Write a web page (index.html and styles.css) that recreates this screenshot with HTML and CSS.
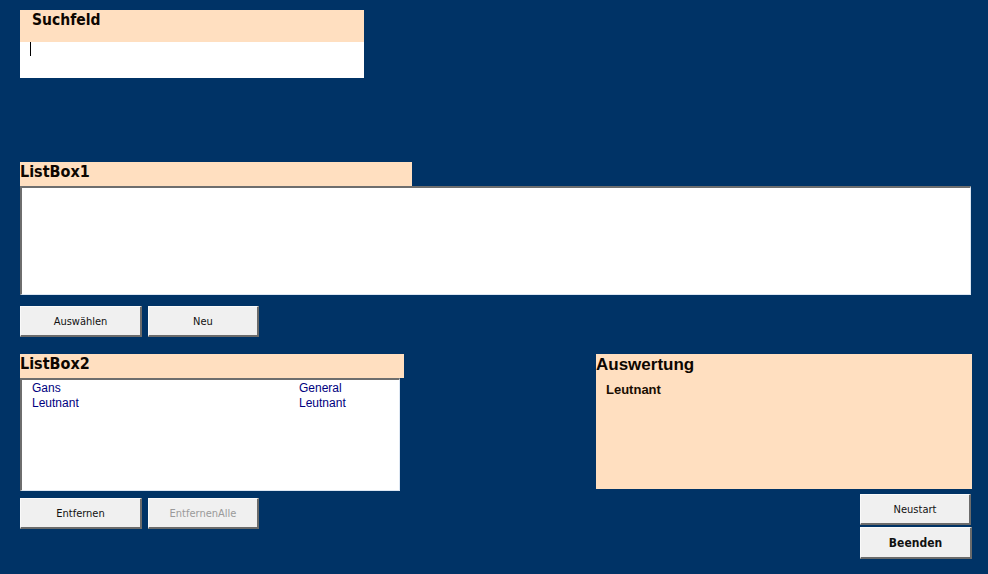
FILE: index.html
```html
<!DOCTYPE html>
<html lang="de">
<head>
<meta charset="utf-8">
<title>Suchfeld</title>
<link rel="stylesheet" href="styles.css">
</head>
<body>
<div class="form">
  <section class="search">
    <div class="search-label">Suchfeld</div>
    <div class="search-input"><span class="caret"></span></div>
  </section>

  <section class="lb1">
    <div class="caption caption-lb1">ListBox1</div>
    <div class="listbox listbox-1"></div>
    <div class="btn-row">
      <button class="btn btn-wide">Auswählen</button>
      <button class="btn btn-narrow">Neu</button>
    </div>
  </section>

  <section class="bottom">
    <div class="left-col">
      <div class="caption caption-lb2">ListBox2</div>
      <div class="listbox listbox-2">
        <div class="lb-row"><span class="c1">Gans</span><span class="c2">General</span></div>
        <div class="lb-row"><span class="c1">Leutnant</span><span class="c2">Leutnant</span></div>
      </div>
      <div class="btn-row btn-row-2">
        <button class="btn btn-wide">Entfernen</button>
        <button class="btn btn-narrow btn-disabled">EntfernenAlle</button>
      </div>
    </div>
    <div class="right-col">
      <div class="result">
        <div class="result-title">Auswertung</div>
        <div class="result-value">Leutnant</div>
      </div>
      <button class="btn btn-side btn-restart">Neustart</button>
      <button class="btn btn-side btn-quit">Beenden</button>
    </div>
  </section>
</div>
</body>
</html>
```

FILE: styles.css
```css
html, body {
  margin: 0;
  padding: 0;
  height: 100%;
}
body {
  background: #003366;
  overflow: hidden;
}
.form {
  display: flex;
  flex-direction: column;
  padding: 10px 16px 0 20px;
}
.search {
  width: 344px;
  display: flex;
  flex-direction: column;
}
.search-label {
  background: #ffdfc0;
  height: 32px;
  box-sizing: border-box;
  padding-left: 12px;
  font-family: "DejaVu Sans Condensed", "DejaVu Sans", sans-serif;
  font-weight: bold;
  font-size: 15.5px;
  line-height: 20px;
  color: #0d0600;
}
.search-input {
  background: #fff;
  height: 36px;
  padding-left: 10px;
}
.caret {
  display: block;
  width: 1px;
  height: 14px;
  background: #000;
}
.lb1 {
  margin-top: 84px;
  display: flex;
  flex-direction: column;
}
.caption {
  background: #ffdfc0;
  height: 24px;
  font-family: "DejaVu Sans Condensed", "DejaVu Sans", sans-serif;
  font-weight: bold;
  font-size: 16px;
  line-height: 20px;
  color: #0d0600;
}
.caption-lb1 { width: 392px; }
.caption-lb2 { width: 384px; }
.listbox {
  background: #fff;
  box-sizing: border-box;
  border-style: solid;
  border-width: 2px 1px 1px 2px;
  border-color: #6e6e6e #dce6f2 #dce6f2 #6e6e6e;
}
.listbox-1 {
  width: 951px;
  height: 109px;
}
.listbox-2 {
  width: 380px;
  height: 113px;
  padding: 1px 0 0 10px;
}
.lb-row {
  display: grid;
  grid-template-columns: 267px auto;
  font-family: "Liberation Sans", Arial, sans-serif;
  font-size: 12px;
  line-height: 15px;
  color: #000080;
}
.btn-row {
  display: flex;
  gap: 6px;
  margin-top: 11px;
}
.btn-row-2 { margin-top: 7px; }
.btn {
  box-sizing: border-box;
  height: 31px;
  margin: 0;
  padding: 0;
  background: #f0f0f0;
  border-style: solid;
  border-width: 1px 2px 2px 1px;
  border-color: #fafafa #6b6b6b #6b6b6b #fafafa;
  font-family: "DejaVu Sans Condensed", "DejaVu Sans", sans-serif;
  font-size: 11px;
  color: #111;
  text-align: center;
}
.btn-wide { width: 122px; }
.btn-narrow { width: 111px; }
.btn-disabled { color: #9a9a9a; }
.bottom {
  margin-top: 17px;
  display: flex;
  justify-content: space-between;
  align-items: flex-start;
}
.left-col {
  display: flex;
  flex-direction: column;
}
.right-col {
  display: flex;
  flex-direction: column;
  align-items: flex-end;
}
.result {
  width: 376px;
  height: 135px;
  background: #ffdfc0;
  box-sizing: border-box;
  padding-top: 1px;
}
.result-title {
  font-family: "Liberation Sans", Arial, sans-serif;
  font-weight: bold;
  font-size: 17px;
  line-height: 20px;
  color: #0d0600;
}
.result-value {
  margin-top: 7px;
  padding-left: 10px;
  font-family: "Liberation Sans", Arial, sans-serif;
  font-weight: bold;
  font-size: 13px;
  line-height: 16px;
  color: #1a0d00;
}
.btn-side { width: 111px; }
.btn-restart {
  margin-top: 5px;
  margin-right: 1px;
}
.btn-quit {
  margin-top: 2px;
  width: 112px;
  height: 32px;
  font-weight: bold;
  font-size: 12px;
}
```
